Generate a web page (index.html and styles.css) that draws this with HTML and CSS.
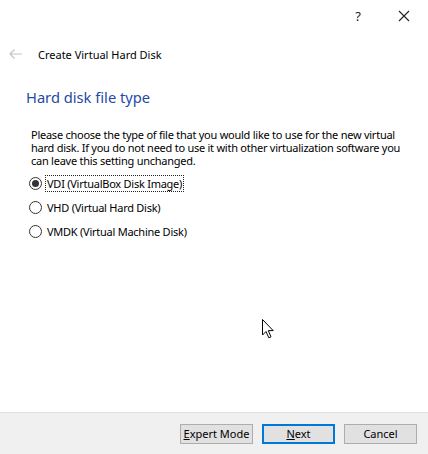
FILE: index.html
```html
<html>
  <head>
    <meta charset="UTF-8">
    <title>Create Virtual Hard Disk</title>
    <link rel="stylesheet" href="styles.css">
  </head>
  <body>
    <div class="dialog">
      <div class="titlebar">
        <span class="tb-btn help">?</span>
        <span class="tb-btn close">
          <svg width="12" height="12" viewBox="0 0 12 12"><path d="M1 1 L11 11 M11 1 L1 11" stroke="#222" stroke-width="1.1" fill="none"/></svg>
        </span>
      </div>
      <div class="wizard-head">
        <span class="back">
          <svg width="14" height="10" viewBox="0 0 14 10"><path d="M1 5 H13 M5.5 0.5 L1 5 L5.5 9.5" stroke="#c4c4c4" stroke-width="1.2" fill="none"/></svg>
        </span>
        <span class="wizard-title">Create Virtual Hard Disk</span>
      </div>
      <div class="content">
        <h2 class="page-title">Hard disk file type</h2>
        <p class="intro">Please choose the type of file that you would like to use for the new virtual hard disk. If you do not need to use it with other virtualization software you can leave this setting unchanged.</p>
        <div class="options">
          <label class="option">
            <span class="radio checked"></span>
            <span class="option-text focused">VDI (VirtualBox Disk Image)</span>
          </label>
          <label class="option">
            <span class="radio"></span>
            <span class="option-text">VHD (Virtual Hard Disk)</span>
          </label>
          <label class="option">
            <span class="radio"></span>
            <span class="option-text">VMDK (Virtual Machine Disk)</span>
          </label>
        </div>
      </div>
      <div class="footer">
        <button class="btn"><u>E</u>xpert Mode</button>
        <button class="btn default"><u>N</u>ext</button>
        <button class="btn">Cancel</button>
      </div>
    </div>
    <!-- mouse pointer -->
    <svg class="cursor" width="13" height="20" viewBox="0 0 13 20">
      <path d="M0.5 0.5 V16 L4 12.5 L6.8 18.8 L9 17.8 L6.3 11.6 H11.2 Z" fill="#fff" stroke="#000" stroke-width="1"/>
    </svg>
  </body>
</html>
```
FILE: styles.css
```css
body {
  margin: 0;
  padding: 0;
  background: #ffffff;
  font-family: "Noto Sans", "Open Sans", sans-serif;
  font-size: 11px;
  color: #000;
}
.dialog {
  height: 454px;
  display: flex;
  flex-direction: column;
}
.titlebar {
  height: 31px;
  display: flex;
  justify-content: flex-end;
  align-items: center;
}
.tb-btn {
  width: 46px;
  height: 31px;
  display: flex;
  align-items: center;
  justify-content: center;
}
.help {
  font-size: 13px;
  color: #222;
}
.close {
  margin-right: 1px;
}
.wizard-head {
  height: 46px;
  display: flex;
  align-items: center;
  padding-bottom: 1px;
}
.back {
  width: 38px;
  padding-left: 9px;
  box-sizing: border-box;
  display: flex;
}
.wizard-title {
  font-size: 11px;
}
.content {
  flex: 1;
  padding-left: 26px;
}
.page-title {
  margin: 9px 0 0;
  font-weight: normal;
  font-size: 14.7px;
  color: #1f4aa3;
}
.intro {
  margin: 21px 0 0 5px;
  width: 372px;
  line-height: 13px;
  letter-spacing: -0.25px;
}
.options {
  margin: 7px 0 0 3px;
  display: flex;
  flex-direction: column;
  gap: 6px;
}
.option {
  display: flex;
  align-items: center;
  height: 18px;
}
.radio {
  width: 11px;
  height: 11px;
  border: 1px solid #333;
  border-radius: 50%;
  margin-right: 3px;
  display: flex;
  align-items: center;
  justify-content: center;
}
.radio.checked::after {
  content: "";
  width: 7px;
  height: 7px;
  border-radius: 50%;
  background: #333;
}
.option-text {
  padding: 0 1px;
  border: 1px dotted transparent;
  letter-spacing: -0.25px;
}
.option-text.focused {
  border-color: #222;
}
.footer {
  height: 41px;
  border-top: 1px solid #dfdfdf;
  background: #f0f0f0;
  display: flex;
  justify-content: flex-end;
  align-items: center;
  gap: 9px;
  padding-right: 11px;
}
.btn {
  width: 73px;
  height: 20px;
  border: 1px solid #adadad;
  background: #e1e1e1;
  font-family: inherit;
  font-size: 11px;
  padding: 0;
  color: #000;
}
.btn.default {
  border: 2px solid #0078d7;
}
.cursor {
  position: absolute;
  left: 262px;
  top: 319px;
}
```
